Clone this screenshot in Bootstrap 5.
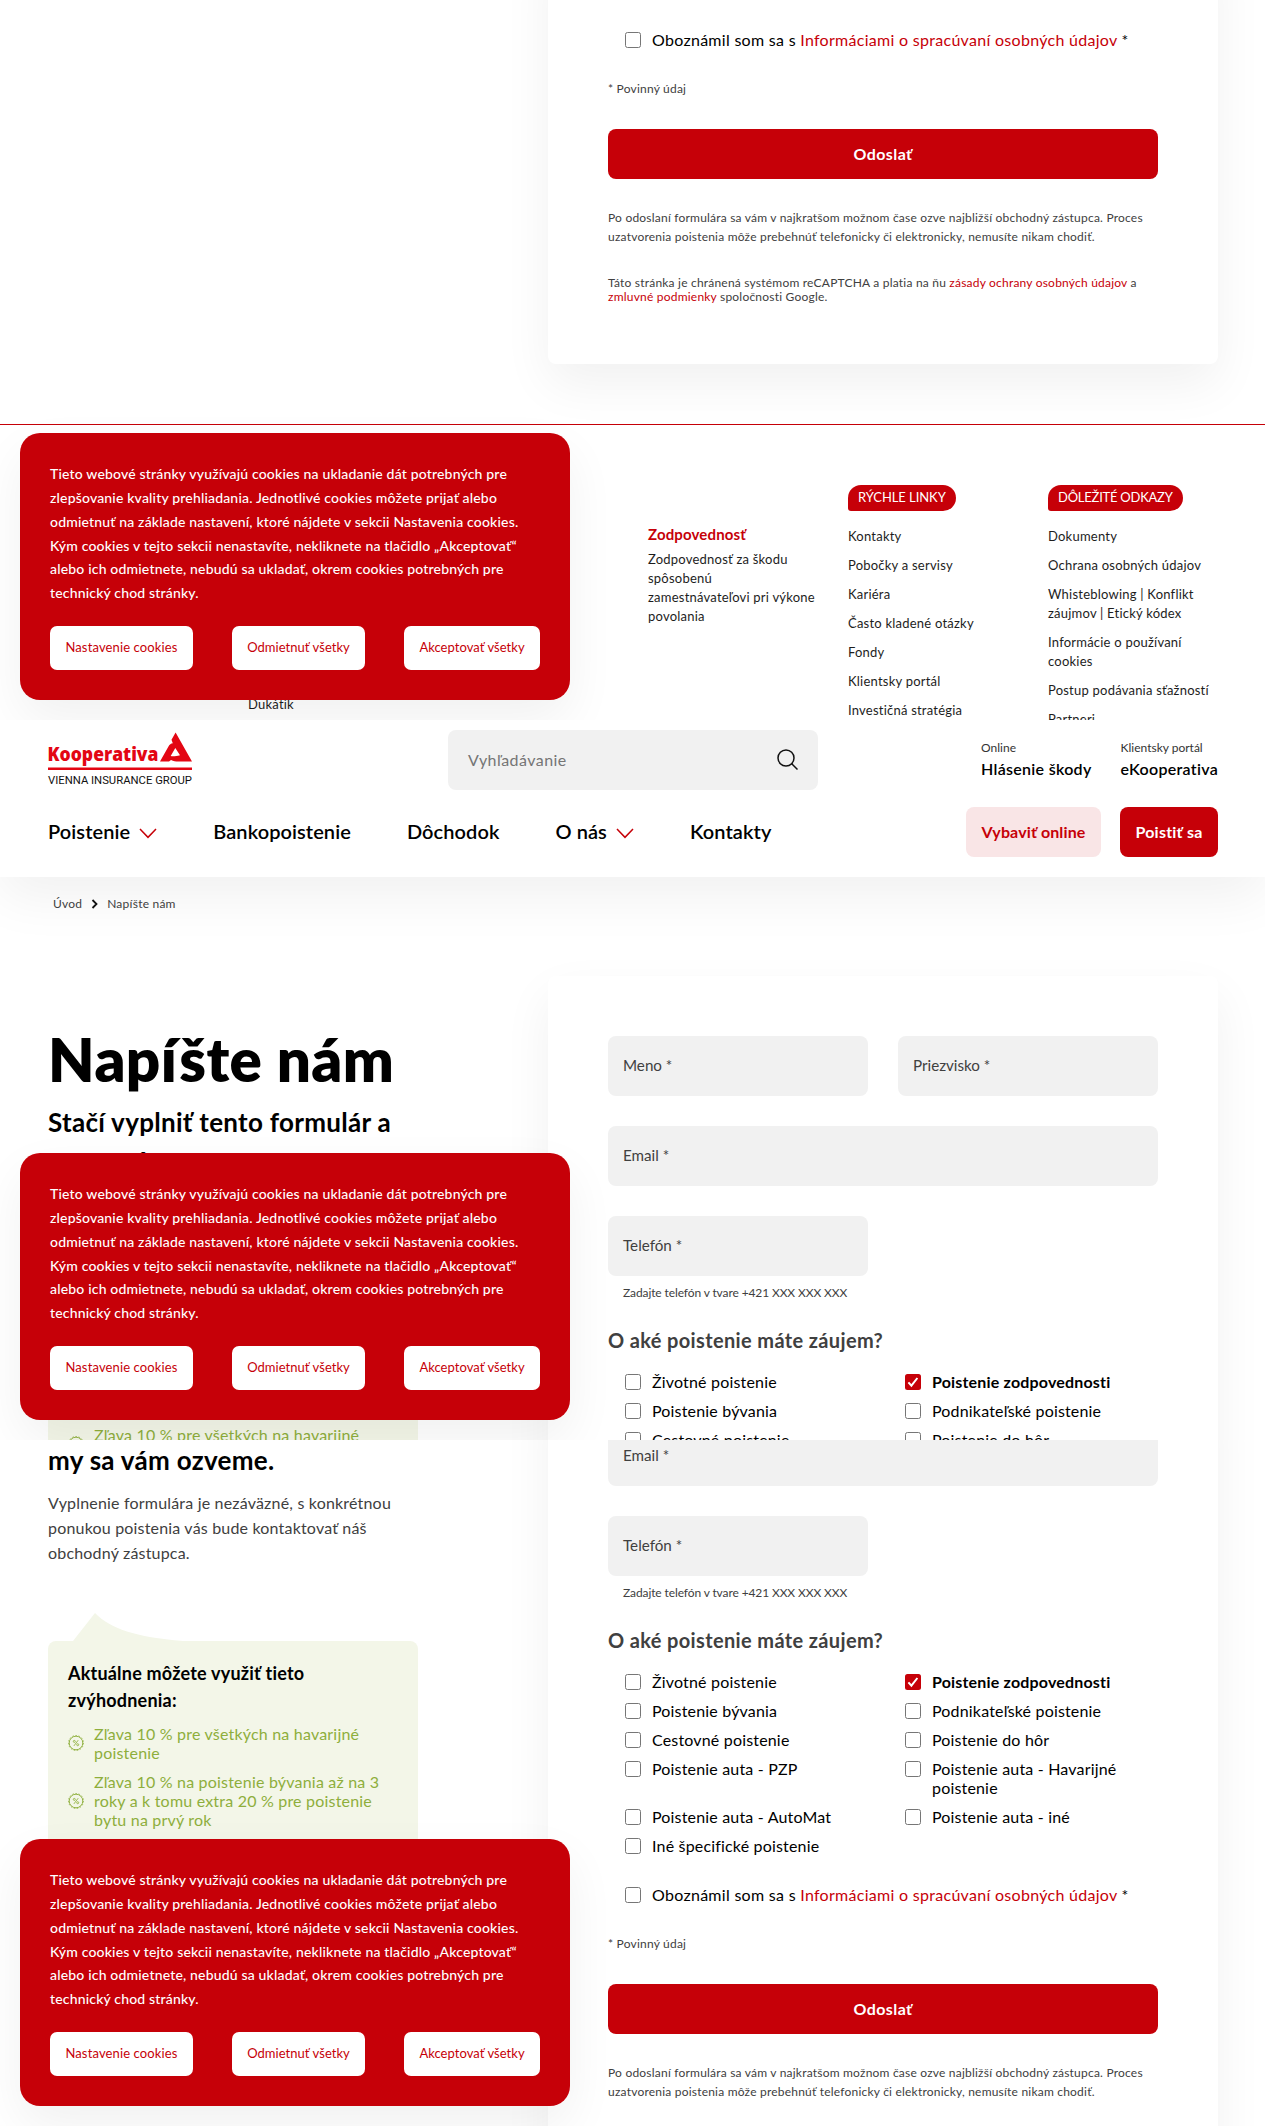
<!DOCTYPE html>
<html lang="sk">
<head>
<meta charset="utf-8">
<meta name="viewport" content="width=device-width, initial-scale=1">
<title>Napíšte nám | Kooperativa</title>
<link href="https://cdn.jsdelivr.net/npm/bootstrap@5.3.0/dist/css/bootstrap.min.css" rel="stylesheet">
<style>
:root{--koop:#c60008}
body{font-family:Lato,sans-serif;font-size:16px;line-height:19px;color:#000;background:#fff;letter-spacing:.014em;width:1265px;overflow-x:hidden}
a{color:inherit;text-decoration:none}
.red,.red:hover{color:var(--koop)}
.strip{position:relative;overflow:hidden;height:720px}
.strip-last{height:686px}
.wrap{padding:0 47px 0 48px}
.tiny{font-size:12px;color:#404040;letter-spacing:.0175em}
.soft-shadow{box-shadow:0 20px 50px rgba(0,0,0,.06)}

/* form card */
.panel{width:670px;padding:60px;background:#fff;border-radius:8px}
.panel-end{margin-top:-60px;padding-top:90px;height:424px}
.panel-mid{margin-top:-60px;height:820px}
.field{height:60px;background:#f1f1f1;border-radius:8px;padding:0 15px 2px;color:#404040;font-size:15.2px;letter-spacing:0;display:flex;align-items:center}
.half{width:260px}
.field-gap{margin-bottom:30px}
.field-cut{margin-top:-14px}
.hint{padding:7px 15px 0;margin-bottom:24px;letter-spacing:-.009em}
.ask{font-size:20px;line-height:30px;font-weight:700;color:#404040;margin:-1px 0 17px;letter-spacing:.018em}
.opts{padding-left:16px}
.opt{display:flex;align-items:flex-start;margin-bottom:10px;letter-spacing:.011em}
.opts .opt{width:254px}
.opts .opt:nth-child(odd){width:280px}
.opts .opt:nth-child(odd):last-child{margin-bottom:30px}
.box{flex:none;width:16px;height:16px;margin:2px 11.500px 0 .5px;border:1px solid #767676;border-radius:2.5px;background:#fff}
.box-on{border:0;background:var(--koop)}
.consent{padding-left:16px;margin-bottom:29.5px;letter-spacing:.018em}
.send{height:50px;margin:31px 0 29px;border:0;border-radius:8px;background:var(--koop);color:#fff;font-weight:700;letter-spacing:.026em;padding:0}
.captcha{line-height:14px;margin-top:30px}

/* cookie bar */
.cookie{position:absolute;left:20px;bottom:20px;width:550px;height:267px;padding:29px 30px 30px;border-radius:20px;background:var(--koop);color:#fff;box-shadow:0 20px 50px rgba(0,0,0,.06)}
.cookie p{font-size:14px;line-height:23.85px;font-weight:500;letter-spacing:.0125em;margin:0 -10px 21px 0}
.cookie-btn{height:44px;padding:0;border:0;border-radius:7px;background:#fff;color:var(--koop);font-size:13px;letter-spacing:.003em;width:136px}
.cookie-btn:first-child{width:143px;letter-spacing:.01em}
.cookie-btn:nth-child(2){width:133px}

/* footer */
.foot{margin-top:60px;border-top:1px solid var(--koop);padding-top:60px;font-size:13px}
.foot-col{width:200px;flex:none;padding-right:28px;color:#1d1d1d;letter-spacing:.017em}
.foot-col a{display:block;margin-bottom:10px}
.pill{display:inline-block;height:26px;line-height:25px;padding:0 10px;margin-bottom:16px;border-radius:13px 13px 13px 3px;background:var(--koop);color:#fff;font-size:13px;letter-spacing:-.005em}
.pill-wide{letter-spacing:-.018em}
.foot-col h6{font-size:15px;line-height:19px;font-weight:700;margin:40px 0 6px;letter-spacing:.01em}

/* header */
.top{height:157px;padding-top:10px;background:#fff;position:relative}
.search{width:370px;height:60px;margin-left:256px;padding:0 20px 1px;border-radius:8px;background:#f1f1f1;color:#757575;letter-spacing:.028em}
.portal{font-weight:600;color:#000;line-height:20px;letter-spacing:.018em;padding-bottom:4px}
.portal small{display:block;font-size:12px;font-weight:400;color:#333;letter-spacing:0;line-height:22px}
.menu{height:50px;margin-top:17px;font-size:20px;font-weight:600;letter-spacing:.004em}
.menu a{margin-right:56px;line-height:48px}
.menu svg{margin-left:4px}
.cta{height:50px;line-height:49px;border-radius:8px;padding:0 15.500px;font-size:16px;font-weight:700;background:#f9e5e6;color:var(--koop);letter-spacing:.007em}
.cta-main{background:var(--koop);color:#fff;font-weight:700;margin-left:19px;letter-spacing:.014em}
.crumbs{padding:17px 0 0 5px;height:99px;position:relative}
.crumbs svg{margin:0 6.5px}

/* left column */
.side{width:370px}
.side h1{font-size:60px;line-height:72px;font-weight:800;margin:47px 0 7.5px;letter-spacing:.007em;white-space:nowrap}
.side h2{font-size:26px;line-height:39px;font-weight:700;margin:0;letter-spacing:.011em;white-space:nowrap}
.side-cut{padding-top:1px}
.side .intro{line-height:25px;color:#404040;margin:10px 0 47.5px;letter-spacing:.0116em}
.tail{display:block;margin-left:25px}
.deal{background:#f3f6e8;border-radius:8px;padding:19.5px 20px 40px}
.deal-low{margin-top:160.5px;padding-top:83.5px}
.deal h3{font-size:18px;line-height:27px;font-weight:700;margin:0 0 10px;letter-spacing:.0115em}
.deal-row{display:flex;align-items:center;gap:10px;margin-bottom:10px;color:#8eae3c;letter-spacing:.0125em;white-space:nowrap}
.deal-row svg{flex:none}
</style>
</head>
<body>

<svg width="0" height="0" class="position-absolute">
  <symbol id="pct" viewBox="0 0 16 16"><g fill="none" stroke="#93b344"><circle cx="8" cy="8" r="6.8" stroke-width="1"/><circle cx="8" cy="8" r="7.5" stroke-width=".9" stroke-dasharray="1.5 1.64"/><path d="M10.2 5.2 5.9 10.9" stroke-width=".9"/><circle cx="6.3" cy="6.4" r="1" stroke-width=".9"/><circle cx="9.7" cy="9.7" r="1" stroke-width=".9"/></g></symbol>
  <symbol id="down" viewBox="0 0 18 11"><path d="M1 1l8 8.3L17 1" fill="none" stroke="#c60008" stroke-width="1.5"/></symbol>
  <symbol id="tick" viewBox="0 0 16 16"><path d="M3.4 8.4l3 3.2 6-7.6" fill="none" stroke="#fff" stroke-width="2"/></symbol>
</svg>

<section class="strip">
  <div class="wrap d-flex justify-content-end">
    <div class="panel panel-end soft-shadow">
      <label class="opt consent"><span class="box"></span><span>Oboznámil som sa s <a class="red" href="#">Informáciami o spracúvaní osobných údajov</a> *</span></label>
      <div class="tiny">* Povinný údaj</div>
      <button class="btn send w-100 d-block" type="button">Odoslať</button>
      <div class="tiny text-nowrap">Po odoslaní formulára sa vám v najkratšom možnom čase ozve najbližší obchodný zástupca. Proces<br>uzatvorenia poistenia môže prebehnúť telefonicky či elektronicky, nemusíte nikam chodiť.</div>
      <div class="tiny captcha text-nowrap">Táto stránka je chránená systémom reCAPTCHA a platia na ňu <a class="red" href="#">zásady ochrany osobných údajov</a> a<br><a class="red" href="#">zmluvné podmienky</a> spoločnosti Google.</div>
    </div>
  </div>
  <footer class="foot">
    <div class="wrap d-flex">
      <div class="foot-col"></div>
      <div class="foot-col d-flex align-items-end" style="height:229px"><span>Dukátik</span></div>
      <div class="foot-col"></div>
      <div class="foot-col pe-0"><h6 class="red">Zodpovednosť</h6>Zodpovednosť za škodu<br>spôsobenú<br>zamestnávateľovi pri výkone<br>povolania</div>
      <div class="foot-col">
        <span class="pill">RÝCHLE LINKY</span>
        <a href="#">Kontakty</a><a href="#">Pobočky a servisy</a><a href="#">Kariéra</a><a href="#">Často kladené otázky</a><a href="#">Fondy</a><a href="#">Klientsky portál</a><a href="#">Investičná stratégia</a>
      </div>
      <div class="foot-col pe-0 text-nowrap">
        <span class="pill pill-wide">DÔLEŽITÉ ODKAZY</span>
        <a href="#">Dokumenty</a><a href="#">Ochrana osobných údajov</a><a href="#">Whisteblowing | Konflikt<br>záujmov | Etický kódex</a><a href="#">Informácie o používaní<br>cookies</a><a href="#">Postup podávania sťažností</a><a href="#">Partneri</a>
      </div>
    </div>
  </footer>
  <div class="cookie">
    <p class="text-nowrap">Tieto webové stránky využívajú cookies na ukladanie dát potrebných pre<br>zlepšovanie kvality prehliadania. Jednotlivé cookies môžete prijať alebo<br>odmietnuť na základe nastavení, ktoré nájdete v sekcii Nastavenia cookies.<br>Kým cookies v tejto sekcii nenastavíte, nekliknete na tlačidlo „Akceptovať“<br>alebo ich odmietnete, nebudú sa ukladať, okrem cookies potrebných pre<br>technický chod stránky.</p>
    <div class="d-flex justify-content-between"><button class="btn cookie-btn" type="button">Nastavenie cookies</button><button class="btn cookie-btn" type="button">Odmietnuť všetky</button><button class="btn cookie-btn" type="button">Akceptovať všetky</button></div>
  </div>
</section>

<section class="strip">
  <header class="top soft-shadow">
    <div class="wrap">
      <div class="d-flex align-items-center">
        <svg width="144" height="52" viewBox="0 2.500 144 52" class="flex-shrink-0 overflow-visible">
          <text x="-.5" y="29.500" font-family="'Open Sans',sans-serif" font-weight="800" font-size="19.5" letter-spacing="0" textLength="111" lengthAdjust="spacingAndGlyphs" fill="#e30613">Kooperativa</text>
          <path fill="#e30613" fill-rule="evenodd" d="M127.600 1 144 30H130.500c-3 0-5-.4-7.500-1.500l-2 1.500H112l8.600-15.200c1-1.900 2.300-2.800 4.200-3.100l-1.300-3.500zM127.300 16.500l-4.600 8c2.400.5 5.300.2 9.300-.7z"/>
          <path fill="#e30613" d="M0 36h144v2.400H0z"/>
          <text x="0" y="52.500" font-family="Roboto,sans-serif" font-weight="400" font-size="11.300" letter-spacing="0" textLength="144" lengthAdjust="spacingAndGlyphs" fill="#111">VIENNA INSURANCE GROUP</text>
        </svg>
        <div class="search d-flex align-items-center justify-content-between flex-shrink-0"><span>Vyhľadávanie</span>
          <svg width="21" height="21" viewBox="0 0 21 21" fill="none" stroke="#111" stroke-width="1.500"><circle cx="9" cy="9" r="8"/><path d="M14.500 14.500l6 6"/></svg></div>
        <a class="portal ms-auto" href="#"><small>Online</small>Hlásenie škody</a>
        <a class="portal" href="#" style="margin-left:29px"><small>Klientsky portál</small>eKooperativa</a>
      </div>
      <nav class="menu d-flex">
        <a href="#">Poistenie <svg width="18" height="11"><use href="#down"/></svg></a><a href="#">Bankopoistenie</a><a href="#">Dôchodok</a><a href="#">O nás <svg width="18" height="11"><use href="#down"/></svg></a><a class="me-0" href="#">Kontakty</a>
        <span class="cta ms-auto">Vybaviť online</span><span class="cta cta-main">Poistiť sa</span>
      </nav>
    </div>
  </header>
  <div class="wrap">
    <div class="crumbs tiny d-flex align-items-start"><span>Úvod</span><svg width="12" height="19" viewBox="0 0 12 19"><path d="M3.500 6l4 4-4 4" fill="none" stroke="#111" stroke-width="1.800"/></svg><span>Napíšte nám</span></div>
    <div class="d-flex justify-content-between align-items-start">
      <div class="side">
        <h1>Napíšte nám</h1>
        <h2>Stačí vyplniť tento formulár a<br>my sa vám ozveme.</h2>
        <div class="deal deal-low">
          <div class="deal-row"><svg width="16" height="16"><use href="#pct"/></svg><span>Zľava 10 % pre všetkých na havarijné<br>poistenie</span></div>
        </div>
      </div>
      <div class="panel soft-shadow">
        <div class="d-flex justify-content-between field-gap"><div class="field half">Meno *</div><div class="field half">Priezvisko *</div></div>
        <div class="field field-gap">Email *</div>
        <div class="field half">Telefón *</div>
        <div class="hint tiny">Zadajte telefón v tvare +421 XXX XXX XXX</div>
        <h4 class="ask">O aké poistenie máte záujem?</h4>
        <div class="opts d-flex flex-wrap">
          <label class="opt"><span class="box"></span>Životné poistenie</label><label class="opt fw-bold"><svg class="box box-on"><use href="#tick"/></svg>Poistenie zodpovednosti</label>
          <label class="opt"><span class="box"></span>Poistenie bývania</label><label class="opt"><span class="box"></span>Podnikateľské poistenie</label>
          <label class="opt"><span class="box"></span>Cestovné poistenie</label><label class="opt"><span class="box"></span>Poistenie do hôr</label>
        </div>
      </div>
    </div>
  </div>
  <div class="cookie">
    <p class="text-nowrap">Tieto webové stránky využívajú cookies na ukladanie dát potrebných pre<br>zlepšovanie kvality prehliadania. Jednotlivé cookies môžete prijať alebo<br>odmietnuť na základe nastavení, ktoré nájdete v sekcii Nastavenia cookies.<br>Kým cookies v tejto sekcii nenastavíte, nekliknete na tlačidlo „Akceptovať“<br>alebo ich odmietnete, nebudú sa ukladať, okrem cookies potrebných pre<br>technický chod stránky.</p>
    <div class="d-flex justify-content-between"><button class="btn cookie-btn" type="button">Nastavenie cookies</button><button class="btn cookie-btn" type="button">Odmietnuť všetky</button><button class="btn cookie-btn" type="button">Akceptovať všetky</button></div>
  </div>
</section>

<section class="strip strip-last">
  <div class="wrap d-flex justify-content-between align-items-start">
    <div class="side side-cut">
      <h2>my sa vám ozveme.</h2>
      <p class="intro text-nowrap">Vyplnenie formulára je nezáväzné, s konkrétnou<br>ponukou poistenia vás bude kontaktovať náš<br>obchodný zástupca.</p>
      <svg class="tail" width="110" height="28" viewBox="0 0 110 28"><path d="M0 28 22 0C38 16 62 24 110 28z" fill="#f3f6e8"/></svg>
      <div class="deal">
        <h3>Aktuálne môžete využiť tieto<br>zvýhodnenia:</h3>
        <div class="deal-row"><svg width="16" height="16"><use href="#pct"/></svg><span>Zľava 10 % pre všetkých na havarijné<br>poistenie</span></div>
        <div class="deal-row"><svg width="16" height="16"><use href="#pct"/></svg><span>Zľava 10 % na poistenie bývania až na 3<br>roky a k tomu extra 20 % pre poistenie<br>bytu na prvý rok</span></div>
      </div>
    </div>
    <div class="panel panel-mid soft-shadow">
      <div class="field field-gap field-cut">Email *</div>
      <div class="field half">Telefón *</div>
      <div class="hint tiny">Zadajte telefón v tvare +421 XXX XXX XXX</div>
      <h4 class="ask">O aké poistenie máte záujem?</h4>
      <div class="opts d-flex flex-wrap">
        <label class="opt"><span class="box"></span>Životné poistenie</label><label class="opt fw-bold"><svg class="box box-on"><use href="#tick"/></svg>Poistenie zodpovednosti</label>
        <label class="opt"><span class="box"></span>Poistenie bývania</label><label class="opt"><span class="box"></span>Podnikateľské poistenie</label>
        <label class="opt"><span class="box"></span>Cestovné poistenie</label><label class="opt"><span class="box"></span>Poistenie do hôr</label>
        <label class="opt"><span class="box"></span>Poistenie auta - PZP</label><label class="opt"><span class="box"></span><span>Poistenie auta - Havarijné<br>poistenie</span></label>
        <label class="opt"><span class="box"></span>Poistenie auta - AutoMat</label><label class="opt"><span class="box"></span>Poistenie auta - iné</label>
        <label class="opt"><span class="box"></span>Iné špecifické poistenie</label>
      </div>
      <label class="opt consent"><span class="box"></span><span>Oboznámil som sa s <a class="red" href="#">Informáciami o spracúvaní osobných údajov</a> *</span></label>
      <div class="tiny">* Povinný údaj</div>
      <button class="btn send w-100 d-block" type="button">Odoslať</button>
      <div class="tiny text-nowrap">Po odoslaní formulára sa vám v najkratšom možnom čase ozve najbližší obchodný zástupca. Proces<br>uzatvorenia poistenia môže prebehnúť telefonicky či elektronicky, nemusíte nikam chodiť.</div>
    </div>
  </div>
  <div class="cookie">
    <p class="text-nowrap">Tieto webové stránky využívajú cookies na ukladanie dát potrebných pre<br>zlepšovanie kvality prehliadania. Jednotlivé cookies môžete prijať alebo<br>odmietnuť na základe nastavení, ktoré nájdete v sekcii Nastavenia cookies.<br>Kým cookies v tejto sekcii nenastavíte, nekliknete na tlačidlo „Akceptovať“<br>alebo ich odmietnete, nebudú sa ukladať, okrem cookies potrebných pre<br>technický chod stránky.</p>
    <div class="d-flex justify-content-between"><button class="btn cookie-btn" type="button">Nastavenie cookies</button><button class="btn cookie-btn" type="button">Odmietnuť všetky</button><button class="btn cookie-btn" type="button">Akceptovať všetky</button></div>
  </div>
</section>

<script src="https://cdn.jsdelivr.net/npm/bootstrap@5.3.0/dist/js/bootstrap.bundle.min.js"></script>
</body>
</html>
